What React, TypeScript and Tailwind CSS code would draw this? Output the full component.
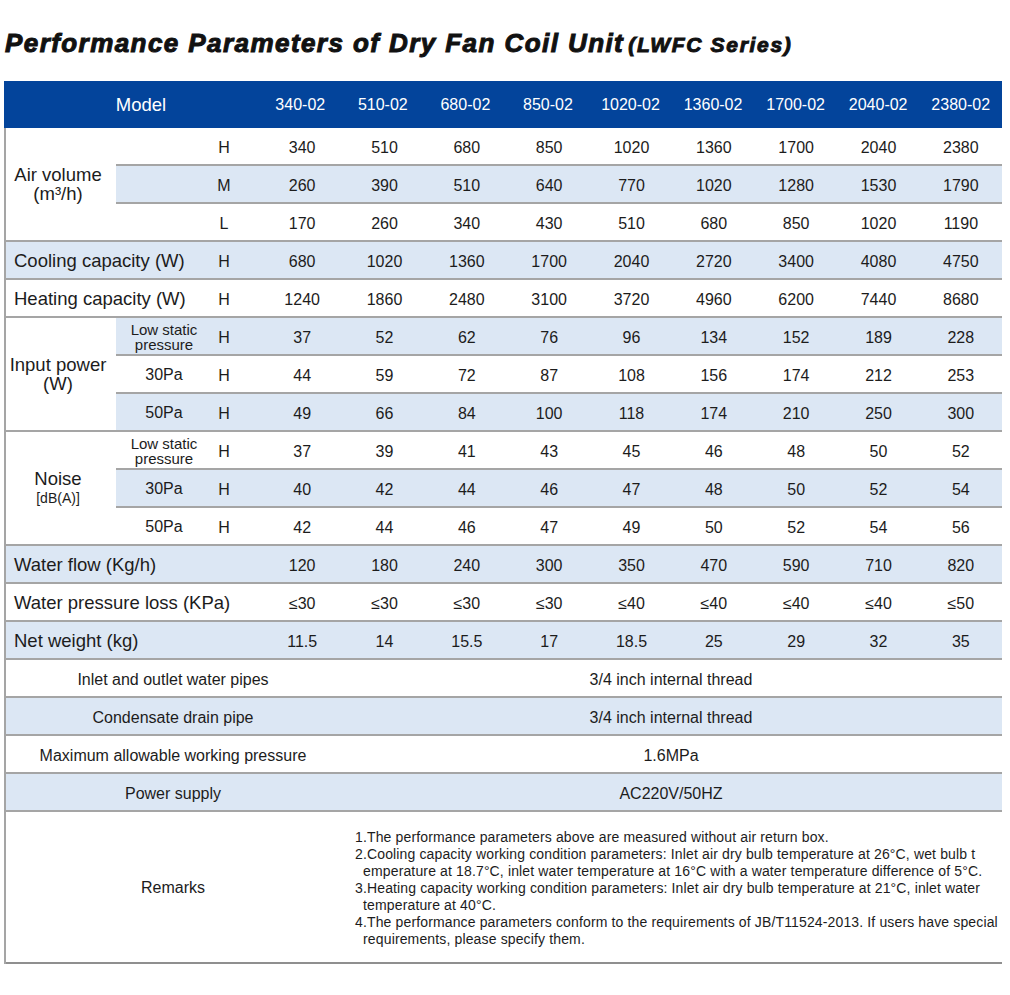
import type { ReactNode } from "react";

const MODELS = ["340-02", "510-02", "680-02", "850-02", "1020-02", "1360-02", "1700-02", "2040-02", "2380-02"];

const BLUE_ROW = "bg-[#dce7f4]";
const LINE = "border-b-2 border-[#a5a5a5]";
const COLS = "grid-cols-[110px_96px_49px_repeat(9,minmax(0,1fr))]";

type SubRow = { sub?: ReactNode; mode?: string; values: (string | number)[]; shaded: boolean };

function Values({ values }: { values: (string | number)[] }) {
  return (
    <>
      {values.map((v, i) => (
        <div key={i} className="flex items-center justify-center pt-[3px] text-[16px]">
          {v}
        </div>
      ))}
    </>
  );
}

function StaticLabel() {
  return (
    <span className="block text-center text-[15px] leading-[15px]">
      Low static
      <br />
      pressure
    </span>
  );
}

function Group({ label, rows }: { label: ReactNode; rows: SubRow[] }) {
  return (
    <>
      <div className={`row-span-3 col-start-1 flex items-center justify-center pr-[6px] text-center bg-white ${LINE}`}>
        {label}
      </div>
      {rows.map((r, i) => (
        <div key={i} className={`col-start-2 col-span-11 grid grid-cols-subgrid ${LINE} ${r.shaded ? BLUE_ROW : "bg-white"}`}>
          <div className="flex items-center justify-center pt-[2px] text-[16px]">{r.sub}</div>
          <div className="flex items-center justify-center pt-[3px] pr-[25px] text-[16px]">{r.mode}</div>
          <Values values={r.values} />
        </div>
      ))}
    </>
  );
}

function FullRow({
  label,
  mode,
  values,
  shaded,
}: {
  label: string;
  mode?: string;
  values: (string | number)[];
  shaded: boolean;
}) {
  return (
    <div className={`col-span-12 grid grid-cols-subgrid ${LINE} ${shaded ? BLUE_ROW : "bg-white"}`}>
      {mode ? (
        <>
          <div className="col-span-2 flex items-center pl-2 pt-[2px] text-[18.5px] whitespace-nowrap">{label}</div>
          <div className="flex items-center justify-center pt-[3px] pr-[25px] text-[16px]">{mode}</div>
        </>
      ) : (
        <div className="col-span-3 flex items-center pl-2 pt-[2px] text-[18.5px] whitespace-nowrap">{label}</div>
      )}
      <Values values={values} />
    </div>
  );
}

function InfoRow({ label, value, shaded }: { label: string; value: string; shaded: boolean }) {
  return (
    <div className={`grid grid-cols-[334px_1fr] h-[38px] ${LINE} ${shaded ? BLUE_ROW : "bg-white"}`}>
      <div className="flex items-center justify-center pt-[3px] text-[16px]">{label}</div>
      <div className="flex items-center justify-center pt-[3px] text-[16px]">{value}</div>
    </div>
  );
}

const REMARKS = [
  "1.The performance parameters above are measured without air return box.",
  "2.Cooling capacity working condition parameters: Inlet air dry bulb temperature at 26°C, wet bulb t",
  "  emperature at 18.7°C, inlet water temperature at 16°C with a water temperature difference of 5°C.",
  "3.Heating capacity working condition parameters: Inlet air dry bulb temperature at 21°C, inlet water",
  "  temperature at 40°C.",
  "4.The performance parameters conform to the requirements of JB/T11524-2013. If users have special",
  "  requirements, please specify them.",
];

export default function App() {
  return (
    <div className="w-[1010px] h-[995px] bg-white text-[#1c1c1c] font-['Liberation_Sans',Arial,sans-serif]">
      <h1 className="flex h-[81px] items-baseline whitespace-nowrap pl-[5px] pt-[30px] font-bold italic leading-none text-[#111] [-webkit-text-stroke:1px_#111]">
        <span className="text-[26px] tracking-[0.055em]">Performance Parameters of Dry Fan Coil Unit</span>
        <span className="ml-[4px] text-[21px] tracking-[0.08em]">(LWFC Series)</span>
      </h1>

      <div className="ml-[4px] w-[998px]">
        <div className={`grid ${COLS} h-[47px] bg-[#03449b] text-white`}>
          <div className="col-span-3 flex items-center justify-center pl-[19px] text-[18.5px]">Model</div>
          {MODELS.map((m) => (
            <div key={m} className="flex items-center justify-center text-[16px]">
              {m}
            </div>
          ))}
        </div>

        <div className={`grid ${COLS} auto-rows-[38px] border-l-2 border-[#a5a5a5]`}>
          <Group
            label={
              <span className="text-[18.5px] leading-[19px]">
                Air volume
                <br />
                (m³/h)
              </span>
            }
            rows={[
              { mode: "H", values: [340, 510, 680, 850, 1020, 1360, 1700, 2040, 2380], shaded: false },
              { mode: "M", values: [260, 390, 510, 640, 770, 1020, 1280, 1530, 1790], shaded: true },
              { mode: "L", values: [170, 260, 340, 430, 510, 680, 850, 1020, 1190], shaded: false },
            ]}
          />
          <FullRow label="Cooling capacity (W)" mode="H" values={[680, 1020, 1360, 1700, 2040, 2720, 3400, 4080, 4750]} shaded />
          <FullRow label="Heating capacity (W)" mode="H" values={[1240, 1860, 2480, 3100, 3720, 4960, 6200, 7440, 8680]} shaded={false} />
          <Group
            label={
              <span className="text-[18.5px] leading-[19px]">
                Input power
                <br />
                (W)
              </span>
            }
            rows={[
              { sub: <StaticLabel />, mode: "H", values: [37, 52, 62, 76, 96, 134, 152, 189, 228], shaded: true },
              { sub: "30Pa", mode: "H", values: [44, 59, 72, 87, 108, 156, 174, 212, 253], shaded: false },
              { sub: "50Pa", mode: "H", values: [49, 66, 84, 100, 118, 174, 210, 250, 300], shaded: true },
            ]}
          />
          <Group
            label={
              <span className="flex flex-col items-center">
                <span className="text-[18.5px] leading-[20px]">Noise</span>
                <span className="text-[14px] leading-[19px]">[dB(A)]</span>
              </span>
            }
            rows={[
              { sub: <StaticLabel />, mode: "H", values: [37, 39, 41, 43, 45, 46, 48, 50, 52], shaded: false },
              { sub: "30Pa", mode: "H", values: [40, 42, 44, 46, 47, 48, 50, 52, 54], shaded: true },
              { sub: "50Pa", mode: "H", values: [42, 44, 46, 47, 49, 50, 52, 54, 56], shaded: false },
            ]}
          />
          <FullRow label="Water flow (Kg/h)" values={[120, 180, 240, 300, 350, 470, 590, 710, 820]} shaded />
          <FullRow
            label="Water pressure loss (KPa)"
            values={["≤30", "≤30", "≤30", "≤30", "≤40", "≤40", "≤40", "≤40", "≤50"]}
            shaded={false}
          />
          <FullRow label="Net weight (kg)" values={[11.5, 14, 15.5, 17, 18.5, 25, 29, 32, 35]} shaded />
        </div>

        <div className="border-l-2 border-[#a5a5a5]">
          <InfoRow label="Inlet and outlet water pipes" value="3/4 inch internal thread" shaded={false} />
          <InfoRow label="Condensate drain pipe" value="3/4 inch internal thread" shaded />
          <InfoRow label="Maximum allowable working pressure" value="1.6MPa" shaded={false} />
          <InfoRow label="Power supply" value="AC220V/50HZ" shaded />
          <div className="grid grid-cols-[334px_1fr] h-[152px] border-b-2 border-[#8f8f8f] bg-white">
            <div className="flex items-center justify-center pt-[2px] text-[16px]">Remarks</div>
            <div className="flex flex-col justify-center pl-[15px] pt-[2px] text-[14px] leading-[17px] tracking-[0.01em] whitespace-pre">
              {REMARKS.map((line, i) => (
                <div key={i}>{line}</div>
              ))}
            </div>
          </div>
        </div>
      </div>
    </div>
  );
}
